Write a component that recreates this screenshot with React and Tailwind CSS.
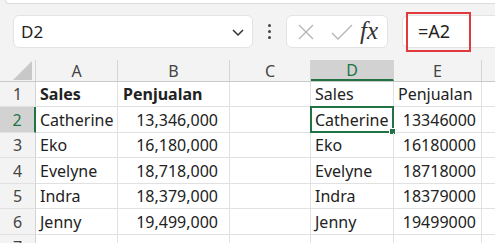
import React from "react";

const cols = [
  { w: "w-[82px]", label: "A" },
  { w: "w-[112px]", label: "B" },
  { w: "w-[81px]", label: "C" },
  { w: "w-[83px]", label: "D" },
  { w: "w-[88px]", label: "E" },
];

const data = [
  ["Catherine", "13,346,000", "Catherine", "13346000"],
  ["Eko", "16,180,000", "Eko", "16180000"],
  ["Evelyne", "18,718,000", "Evelyne", "18718000"],
  ["Indra", "18,379,000", "Indra", "18379000"],
  ["Jenny", "19,499,000", "Jenny", "19499000"],
];

const rowH = ["h-[25px]", "h-[26px]", "h-[25px]", "h-[26px]", "h-[25px]", "h-[26px]", "h-[25px]"];

function Cell({ w, children, className = "" }) {
  return (
    <div className={`${w} shrink-0 h-full border-r border-b border-[#e1e1e1] flex items-center overflow-visible whitespace-nowrap ${className}`}>
      {children}
    </div>
  );
}

export default function App() {
  const rows = [
    ["Sales", "Penjualan", "", "Sales", "Penjualan"],
    ...data.map((d) => [d[0], d[1], "", d[2], d[3]]),
    ["", "", "", "", ""],
  ];
  return (
    <div className="w-[495px] h-[243px] overflow-hidden bg-[#f3f3f3] text-[#222]" style={{ fontFamily: '"Noto Sans", sans-serif' }}>
      <div className="h-[4px] ml-[5px] bg-white border-b border-l border-[#dcdcdc] rounded-bl-[6px]" />
      <div className="flex items-center h-[33px] mt-[11px] pl-[13px] relative">
        <div className="w-[240px] h-[33px] bg-white rounded-[6px] border border-[#e3e3e3] flex items-center justify-between pl-[7px] pr-[7px]">
          <span className="text-[17px] text-[#222]">D2</span>
          <svg width="14" height="10" viewBox="0 0 14 10">
            <path d="M2 3 L7 8 L12 3" fill="none" stroke="#333" strokeWidth="1.5" />
          </svg>
        </div>
        <div className="w-[33px] flex flex-col items-center gap-[3px]">
          <span className="w-[3px] h-[3px] rounded-full bg-[#444]" />
          <span className="w-[3px] h-[3px] rounded-full bg-[#444]" />
          <span className="w-[3px] h-[3px] rounded-full bg-[#444]" />
        </div>
        <div className="w-[102px] h-[33px] bg-white rounded-[6px] border border-[#e3e3e3] flex items-center">
          <svg width="40" height="20" viewBox="0 0 40 20">
            <path d="M12 3 L26 17 M26 3 L12 17" stroke="#b4b4b4" strokeWidth="1.3" fill="none" />
          </svg>
          <svg width="34" height="20" viewBox="0 0 34 20">
            <path d="M5 11 L11 17 L25 3" stroke="#b4b4b4" strokeWidth="1.3" fill="none" />
          </svg>
          <span className="text-[25px] italic text-[#333] leading-none ml-[-1px] mb-[3px]" style={{ fontFamily: '"Liberation Serif", serif' }}>fx</span>
        </div>
        <div className="flex-1 ml-[14px] h-[33px] bg-white rounded-l-[6px] border border-r-0 border-[#e3e3e3] flex items-center pl-[15px]">
          <span className="text-[18px] text-[#222]">=A2</span>
        </div>
        <div className="absolute left-[406px] top-[-3px] w-[65px] h-[40px] border-2 border-[#e0393e]" />
      </div>
      <div className="mt-[12px]">
        <div className="flex h-[22px] border-b border-[#c9c9c9] text-[16px] text-[#444]">
          <div className="w-[36px] shrink-0 h-full border-r border-[#d4d4d4] relative">
            <svg width="19" height="19" viewBox="0 0 19 19" className="absolute right-[3px] bottom-[1px]">
              <path d="M19 0 L19 19 L0 19 Z" fill="#c8c8c8" />
            </svg>
          </div>
          {cols.map((c) => (
            <div
              key={c.label}
              className={`${c.w} shrink-0 h-full border-r border-[#d4d4d4] flex items-center justify-center ${c.label === "D" ? "bg-[#d2d2d2] text-[#217346] border-b-2 border-b-[#217346]" : ""}`}
            >
              {c.label}
            </div>
          ))}
          <div className="flex-1" />
        </div>
        {rows.map((r, i) => {
          const sel = i === 1;
          return (
            <div key={i} className={`flex ${rowH[i]} text-[16px]`}>
              <div
                className={`w-[36px] shrink-0 h-full border-b border-[#e1e1e1] flex items-center justify-center text-[#444] ${sel ? "bg-[#d2d2d2] text-[#217346] border-r-2 border-r-[#217346]" : "bg-[#f3f3f3] border-r border-r-[#d4d4d4]"}`}
              >
                {i + 1}
              </div>
              <div className="flex bg-white flex-1 h-full">
                <Cell w="w-[82px]" className={`pl-[4px] ${i === 0 ? "font-bold" : ""}`}>{r[0]}</Cell>
                <Cell w="w-[112px]" className={`${i === 0 ? "font-bold pl-[5px]" : "justify-end pr-[11px]"}`}>{r[1]}</Cell>
                <Cell w="w-[81px]">{r[2]}</Cell>
                <Cell w="w-[83px]" className="pl-[4px] relative">
                  {r[3]}
                  {sel && (
                    <>
                      <div className="absolute left-[-1px] top-[-1px] right-[-1px] bottom-[-1px] border-2 border-[#217346]" />
                      <div className="absolute right-[-3px] bottom-[-3px] w-[5px] h-[5px] bg-[#217346] border border-white box-content" />
                    </>
                  )}
                </Cell>
                <Cell w="w-[88px]" className={`${i === 0 ? "pl-[4px]" : "justify-end pr-[5px]"}`}>{r[4]}</Cell>
                <div className="flex-1 h-full border-b border-[#e1e1e1]" />
              </div>
            </div>
          );
        })}
      </div>
    </div>
  );
}
